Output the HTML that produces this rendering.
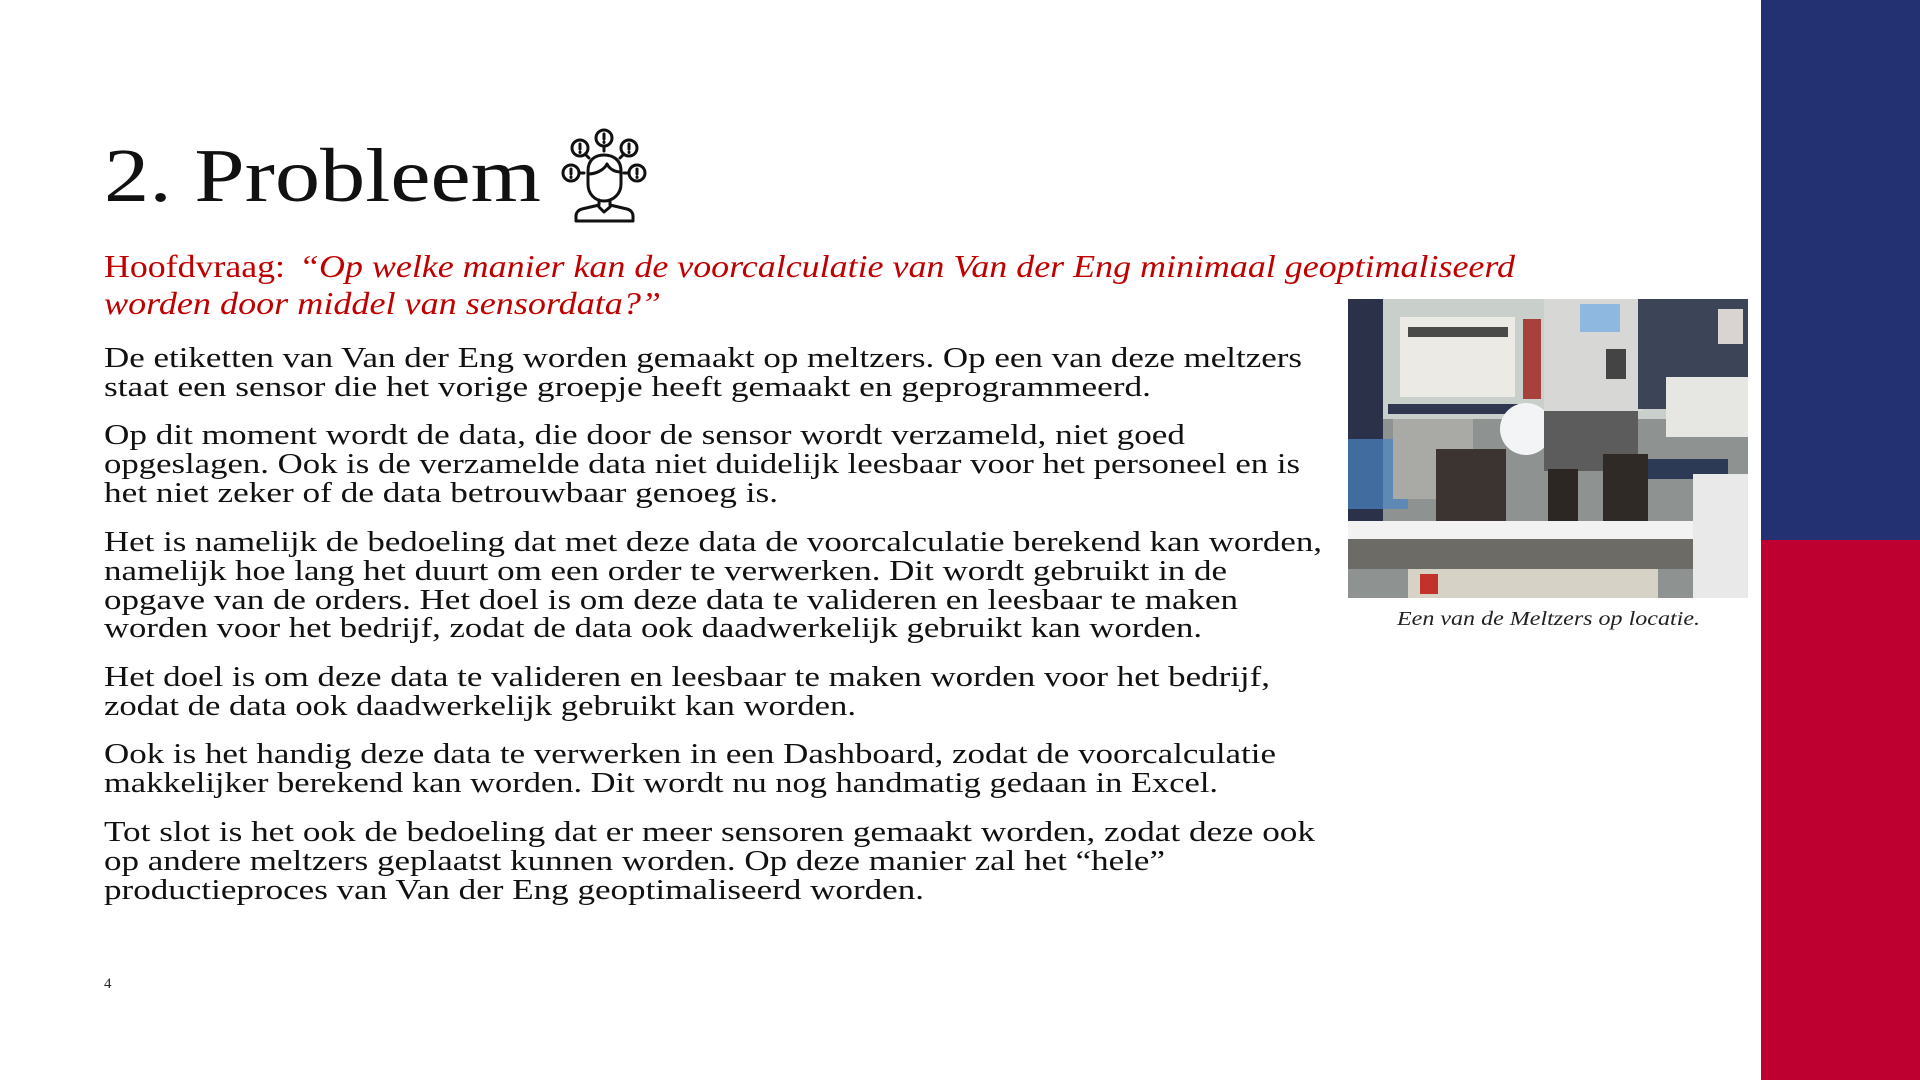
<!DOCTYPE html>
<html><head><meta charset="utf-8"><style>
html,body{margin:0;padding:0;background:#fff;width:1920px;height:1080px;overflow:hidden}
</style></head><body>
<svg width="1920" height="1080" viewBox="0 0 1920 1080" xmlns="http://www.w3.org/2000/svg" style="display:block">
<rect x="1761" y="0" width="159" height="540" fill="#233173"/>
<rect x="1761" y="540" width="159" height="540" fill="#bd0030"/>

<g font-family="Liberation Serif, serif">
<text x="104" y="201" font-size="76" textLength="437" lengthAdjust="spacingAndGlyphs" fill="#111">2. Probleem</text>

<g fill="#c00000" font-size="32">
<text x="104" y="277" textLength="181" lengthAdjust="spacingAndGlyphs">Hoofdvraag:</text>
<text x="299" y="277" font-style="italic" textLength="1216" lengthAdjust="spacingAndGlyphs">“Op welke manier kan de voorcalculatie van Van der Eng minimaal geoptimaliseerd</text>
<text x="104" y="314" font-style="italic" textLength="557" lengthAdjust="spacingAndGlyphs">worden door middel van sensordata?”</text>
</g>

<g fill="#111" font-size="29">
<text x="104" y="367" textLength="1198" lengthAdjust="spacingAndGlyphs">De etiketten van Van der Eng worden gemaakt op meltzers. Op een van deze meltzers</text>
<text x="104" y="396" textLength="1047" lengthAdjust="spacingAndGlyphs">staat een sensor die het vorige groepje heeft gemaakt en geprogrammeerd.</text>

<text x="104" y="444" textLength="1081" lengthAdjust="spacingAndGlyphs">Op dit moment wordt de data, die door de sensor wordt verzameld, niet goed</text>
<text x="104" y="473" textLength="1196" lengthAdjust="spacingAndGlyphs">opgeslagen. Ook is de verzamelde data niet duidelijk leesbaar voor het personeel en is</text>
<text x="104" y="502" textLength="674" lengthAdjust="spacingAndGlyphs">het niet zeker of de data betrouwbaar genoeg is.</text>

<text x="104" y="551" textLength="1218" lengthAdjust="spacingAndGlyphs">Het is namelijk de bedoeling dat met deze data de voorcalculatie berekend kan worden,</text>
<text x="104" y="580" textLength="1123" lengthAdjust="spacingAndGlyphs">namelijk hoe lang het duurt om een order te verwerken. Dit wordt gebruikt in de</text>
<text x="104" y="609" textLength="1134" lengthAdjust="spacingAndGlyphs">opgave van de orders. Het doel is om deze data te valideren en leesbaar te maken</text>
<text x="104" y="637" textLength="1098" lengthAdjust="spacingAndGlyphs">worden voor het bedrijf, zodat de data ook daadwerkelijk gebruikt kan worden.</text>

<text x="104" y="686" textLength="1166" lengthAdjust="spacingAndGlyphs">Het doel is om deze data te valideren en leesbaar te maken worden voor het bedrijf,</text>
<text x="104" y="715" textLength="752" lengthAdjust="spacingAndGlyphs">zodat de data ook daadwerkelijk gebruikt kan worden.</text>

<text x="104" y="763" textLength="1172" lengthAdjust="spacingAndGlyphs">Ook is het handig deze data te verwerken in een Dashboard, zodat de voorcalculatie</text>
<text x="104" y="792" textLength="1114" lengthAdjust="spacingAndGlyphs">makkelijker berekend kan worden. Dit wordt nu nog handmatig gedaan in Excel.</text>

<text x="104" y="841" textLength="1211" lengthAdjust="spacingAndGlyphs">Tot slot is het ook de bedoeling dat er meer sensoren gemaakt worden, zodat deze ook</text>
<text x="104" y="870" textLength="1061" lengthAdjust="spacingAndGlyphs">op andere meltzers geplaatst kunnen worden. Op deze manier zal het “hele”</text>
<text x="104" y="899" textLength="820" lengthAdjust="spacingAndGlyphs">productieproces van Van der Eng geoptimaliseerd worden.</text>
</g>

<text x="1397" y="625" font-size="20" font-style="italic" fill="#222" textLength="303" lengthAdjust="spacingAndGlyphs">Een van de Meltzers op locatie.</text>
<text x="104" y="988" font-size="15" fill="#222">4</text>
</g>

<g transform="translate(560,126)" fill="none" stroke="#111" stroke-width="3" stroke-linecap="round" stroke-linejoin="round">
  <circle cx="44" cy="12" r="8"/><line x1="44" y1="8" x2="44" y2="13"/><line x1="44" y1="16" x2="44" y2="16.5"/><line x1="44" y1="20" x2="44" y2="25"/>
  <circle cx="20" cy="22" r="8"/><line x1="20" y1="18" x2="20" y2="23"/><line x1="20" y1="26" x2="20" y2="26.5"/><line x1="25" y1="28" x2="29" y2="32"/>
  <circle cx="69" cy="22" r="8"/><line x1="69" y1="18" x2="69" y2="23"/><line x1="69" y1="26" x2="69" y2="26.5"/><line x1="64" y1="28" x2="60" y2="32"/>
  <circle cx="11" cy="47" r="8"/><line x1="11" y1="43" x2="11" y2="48"/><line x1="11" y1="51" x2="11" y2="51.5"/><line x1="19" y1="47" x2="24" y2="47"/>
  <circle cx="77" cy="47" r="8"/><line x1="77" y1="43" x2="77" y2="48"/><line x1="77" y1="51" x2="77" y2="51.5"/><line x1="69" y1="47" x2="64" y2="47"/>
  <path d="M28 45 C28 33 36 29 44 29 C52 29 61 33 61 45 L61 58 C61 68 53 75 44 75 C35 75 28 68 28 58 Z"/>
  <path d="M28 48 C36 48 44 44 47 38 C50 44 56 46 61 46"/>
  <path d="M39 74 L39 79 L22 83 C18 84 16 87 16 90 L16 95 L73 95 L73 90 C73 87 71 84 67 83 L50 79 L50 74"/>
  <path d="M39 81 L44 86 L50 81"/>
</g>

<g transform="translate(1348,299)">
  <rect width="400" height="299" fill="#8e9290"/>
  <rect width="400" height="120" fill="#c9cfca"/>
  <rect x="0" y="0" width="35" height="230" fill="#2b3148"/>
  <rect x="52" y="18" width="115" height="80" fill="#eceae4"/>
  <rect x="60" y="28" width="100" height="10" fill="#4a4a48"/>
  <rect x="175" y="20" width="18" height="80" fill="#a8413b"/>
  <rect x="196" y="0" width="98" height="112" fill="#d7d8d5"/>
  <rect x="232" y="5" width="40" height="28" fill="#8fb8e0"/>
  <rect x="258" y="50" width="20" height="30" fill="#444"/>
  <rect x="290" y="0" width="110" height="110" fill="#3c4458"/>
  <rect x="318" y="78" width="82" height="60" fill="#e6e6e2"/>
  <rect x="370" y="10" width="25" height="35" fill="#d9d4d2"/>
  <rect x="40" y="105" width="130" height="10" fill="#2f3850"/>
  <circle cx="178" cy="130" r="26" fill="#f3f4f6"/>
  <rect x="196" y="112" width="94" height="60" fill="#5b5c5b"/>
  <rect x="0" y="140" width="60" height="70" fill="#4a86c5" opacity="0.7"/>
  <rect x="45" y="120" width="80" height="80" fill="#a9aaa6"/>
  <rect x="88" y="150" width="70" height="80" fill="#3b3430"/>
  <rect x="200" y="170" width="30" height="60" fill="#2d2724"/>
  <rect x="255" y="155" width="45" height="70" fill="#2f2a26"/>
  <rect x="0" y="222" width="400" height="18" fill="#f2f2f2"/>
  <rect x="0" y="240" width="350" height="30" fill="#6d6b66"/>
  <rect x="60" y="270" width="250" height="29" fill="#d6d2c6"/>
  <rect x="300" y="160" width="80" height="20" fill="#2d3a55"/>
  <rect x="345" y="175" width="55" height="124" fill="#e9e9e9"/>
  <rect x="72" y="275" width="18" height="20" fill="#c2312a"/>
</g>
</svg>
</body></html>
